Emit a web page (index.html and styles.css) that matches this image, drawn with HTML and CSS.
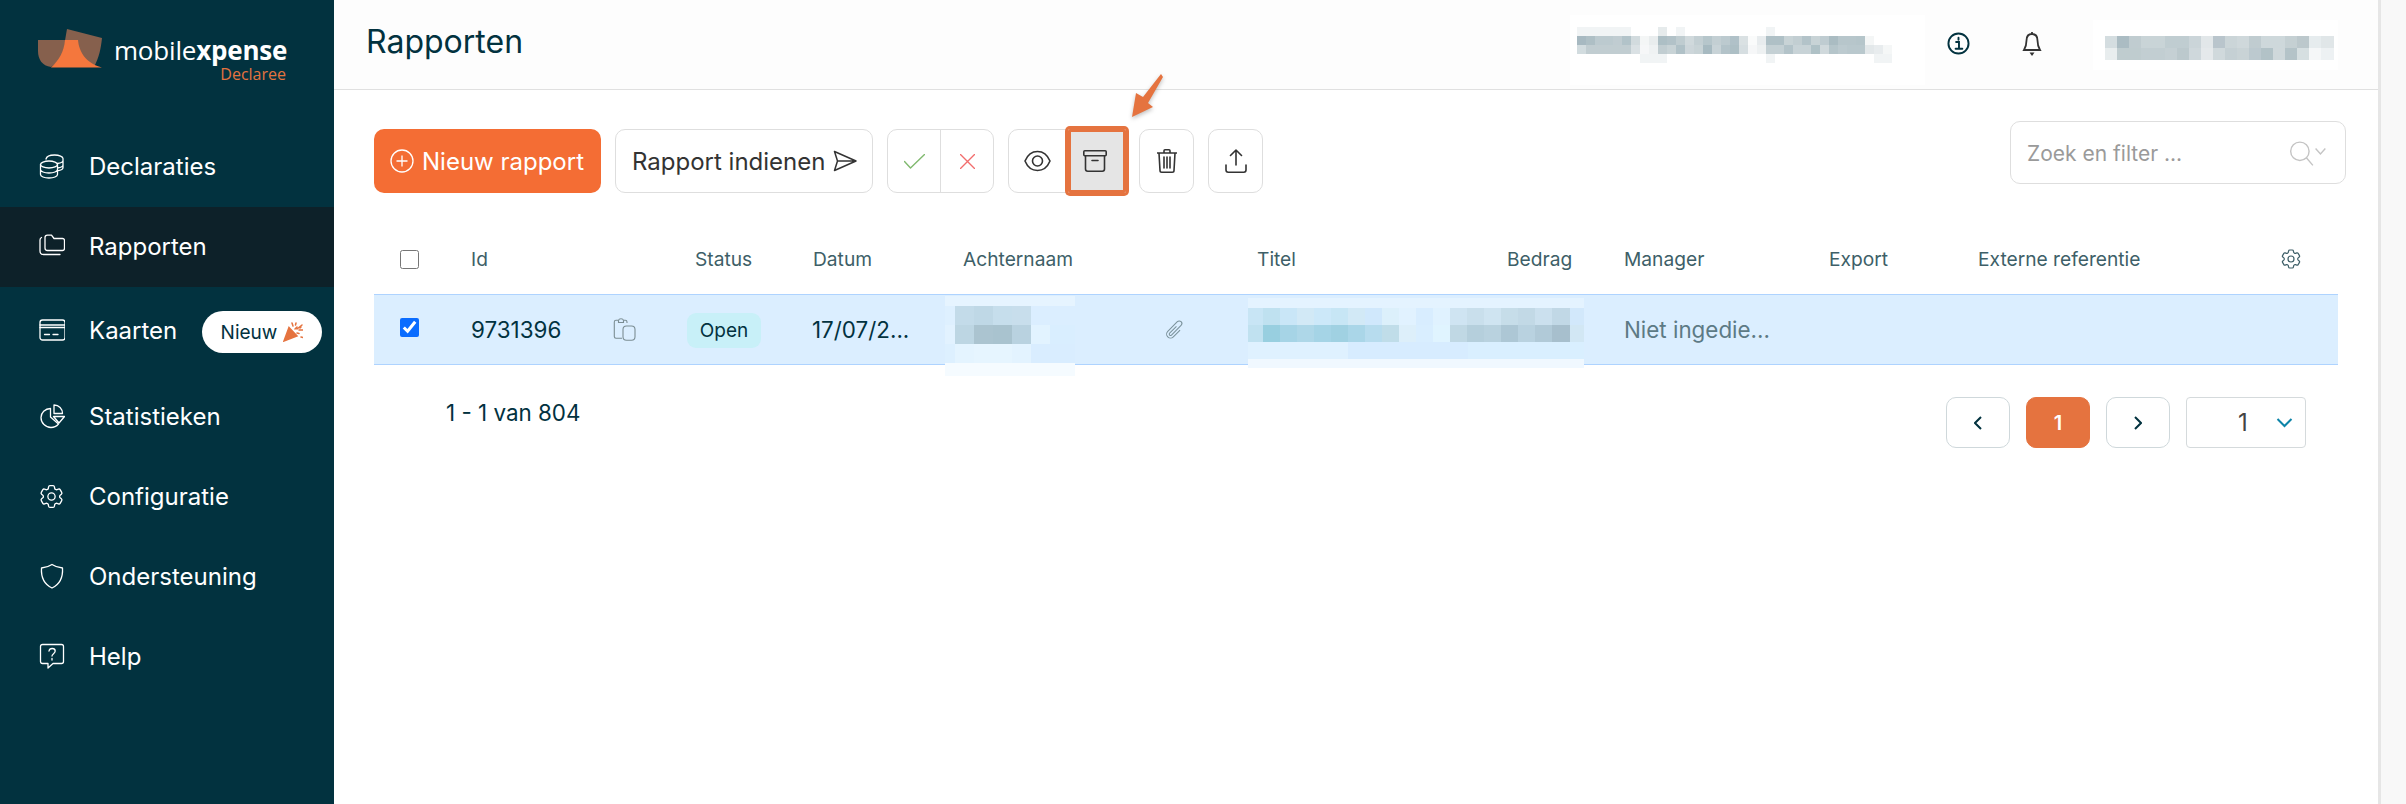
FILE: index.html
```html
<!DOCTYPE html>
<html lang="nl">
<head>
<meta charset="utf-8">
<title>Rapporten</title>
<link rel="stylesheet" href="styles.css">
</head>
<body>
<div class="app">
  <aside class="sidebar">
    <div class="logo">
      <svg class="logo-mark" viewBox="38 28 66 42">
        <path fill="#86604d" d="M38 40h26c2 0 3 0 3 0l0 4c-2 9-8 18-16 23-9-1-13-8-13-16z"/>
        <path fill="#86604d" d="M67 29l35 9c-1 10-3 20-8 29l-24-2-10-5c4-10 5-20 7-31z"/>
        <path fill="#f4773d" d="M65 40h13c1 11 7 23 24 27.500H51c8-7 13-16 14-27.500z"/>
      </svg>
      <div class="logo-text">
        <div class="logo-name">mobile<b>xpense</b></div>
        <div class="logo-sub">Declaree</div>
      </div>
    </div>
    <nav class="nav">
      <a class="nav-item">
        <svg class="nav-icon" viewBox="0 0 26 26"><ellipse cx="10" cy="11.500" rx="8.500" ry="3.500"/><path d="M1.500 11.500v10c0 2 3.800 3.500 8.500 3.500s8.500-1.500 8.500-3.500v-10M1.500 16.500c0 2 3.800 3.500 8.500 3.500s8.500-1.500 8.500-3.500M7 6c.5-2.300 4-4 8.500-4 4.900 0 8.500 1.600 8.500 3.500v9c0 1.500-2 2.800-5.500 3.300M18.500 10.500c3-.4 5.500-1.500 5.500-3M18.500 15c3-.4 5.500-1.500 5.500-3"/></svg>
        <span>Declaraties</span>
      </a>
      <a class="nav-item active">
        <svg class="nav-icon" viewBox="0 0 26 26"><path d="M6 4.500V15c0 1.400 1 2.500 2.500 2.500h15c1.200 0 2-1 2-2.200V7.500c0-1.200-.8-2-2-2H15l-2.500-3.400H8.500C7 2.100 6 3.200 6 4.500z"/><path d="M2.500 4.500C1.500 5 1 6 1 7v11c0 2 1.500 3.500 3.500 3.500H21"/></svg>
        <span>Rapporten</span>
      </a>
      <a class="nav-item tall">
        <svg class="nav-icon" viewBox="0 0 26 26"><rect x="1" y="3" width="25" height="20" rx="2.500"/><path d="M1 8h25M1 10.500h25M5.500 17.500h5M14 17.500h5"/></svg>
        <span>Kaarten</span>
        <span class="badge">Nieuw
          <svg class="party" viewBox="0 0 20 20"><path d="M6 5.500L14 14l-13 5z"/><path d="M9 1l1 3M13 1l-.5 2M19 3l-5 4M16 8h4M14 11l2 .5M18 15l2 .5M12 7l2-2M17 6l1-1"/></svg>
        </span>
      </a>
      <a class="nav-item">
        <svg class="nav-icon" viewBox="0 0 26 26"><path d="M11.500 5.500C6 5.500 2 10 2 14.500 2 20 6.500 24.500 12 24.500c3 0 5.500-1.200 7.500-3.500l-8-7z"/><path d="M15 2c5 0 8.500 3.800 8.500 8.500H15z"/><path d="M14.500 13.500h11l-5.500 6.500z"/></svg>
        <span>Statistieken</span>
      </a>
      <a class="nav-item">
        <svg class="nav-icon nav-icon-gear" viewBox="0 0 24 24"><path d="M9.594 3.940c.09-.542.560-.940 1.110-.940h2.593c.550 0 1.020.398 1.110.940l.213 1.281c.063.374.313.686.645.870.074.040.147.083.220.127.325.196.720.257 1.075.124l1.217-.456a1.125 1.125 0 0 1 1.370.490l1.296 2.247a1.125 1.125 0 0 1-.260 1.431l-1.003.827c-.293.241-.438.613-.430.992a7.723 7.723 0 0 1 0 .255c-.008.378.137.750.430.991l1.004.827c.424.350.534.955.260 1.430l-1.298 2.247a1.125 1.125 0 0 1-1.369.491l-1.217-.456c-.355-.133-.750-.072-1.076.124a6.470 6.470 0 0 1-.220.128c-.331.183-.581.495-.644.869l-.213 1.281c-.090.543-.560.940-1.110.940h-2.594c-.550 0-1.019-.398-1.110-.940l-.213-1.281c-.062-.374-.312-.686-.644-.870a6.520 6.520 0 0 1-.220-.127c-.325-.196-.720-.257-1.076-.124l-1.217.456a1.125 1.125 0 0 1-1.369-.490l-1.297-2.247a1.125 1.125 0 0 1 .260-1.431l1.004-.827c.292-.240.437-.613.430-.991a6.932 6.932 0 0 1 0-.255c.007-.380-.138-.751-.430-.992l-1.004-.827a1.125 1.125 0 0 1-.260-1.430l1.297-2.247a1.125 1.125 0 0 1 1.370-.491l1.216.456c.356.133.751.072 1.076-.124.072-.044.146-.086.220-.128.332-.183.582-.495.644-.869l.214-1.280z"/><path d="M15 12a3 3 0 1 1-6 0 3 3 0 0 1 6 0z"/></svg>
        <span>Configuratie</span>
      </a>
      <a class="nav-item">
        <svg class="nav-icon" viewBox="0 0 26 26"><path d="M13 1.500c3 2 6.500 3.200 10.500 3.500.5 8-1 15.500-10.500 20C3.500 20.500 2 13 2.500 5 6.500 4.700 10 3.500 13 1.500z"/></svg>
        <span>Ondersteuning</span>
      </a>
      <a class="nav-item">
        <svg class="nav-icon" viewBox="0 0 26 26"><path d="M3.500 1.500h19c1.200 0 2 .8 2 2v15c0 1.200-.8 2-2 2H14l-5 4.500v-4.500H3.500c-1.200 0-2-.8-2-2v-15c0-1.200.8-2 2-2z"/><path d="M10 8c.3-1.600 1.500-2.500 3.200-2.500 1.800 0 3 1 3 2.600 0 2.600-3.200 2.500-3.200 4.900M13 15.500v1.500"/></svg>
        <span>Help</span>
      </a>
    </nav>
  </aside>

  <main class="main">
    <header class="topbar">
      <h1 class="title">Rapporten</h1>
      <svg class="mosaic mosaic-org" viewBox="1570 15 355 70" fill="none" stroke-width="9">
        <path stroke="#fff" stroke-width="70" d="M1570 50h355"/>
        <path stroke="#f1f4f5" d="M1577 31.500h54M1676 31.500h9M1766 31.500h9M1640 58.500h27M1766 58.500h9M1874 58.500h18"/>
        <path stroke="#e6ebec" d="M1658 31.500h9"/>
        <path stroke="#a7b9c1" d="M1577 40.500h9"/><path stroke="#aebfc5" d="M1586 40.500h9"/><path stroke="#bccacf" d="M1595 40.500h18"/><path stroke="#c0ccd1" d="M1613 40.500h9"/><path stroke="#b2c3c9" d="M1622 40.500h9"/><path stroke="#d2dbde" d="M1631 40.500h9"/><path stroke="#f4f6f6" d="M1640 40.500h9"/><path stroke="#e9edee" d="M1649 40.500h9"/><path stroke="#adbfc5" d="M1658 40.500h9"/><path stroke="#b2c2c8" d="M1667 40.500h9"/><path stroke="#bfccd0" d="M1676 40.500h9"/><path stroke="#d0d9dc" d="M1685 40.500h9"/><path stroke="#c3cfd3" d="M1694 40.500h9"/><path stroke="#b6c6cb" d="M1703 40.500h9"/><path stroke="#c3cfd3" d="M1712 40.500h9"/><path stroke="#bccacf" d="M1721 40.500h9"/><path stroke="#b0c1c8" d="M1730 40.500h9"/><path stroke="#dae1e3" d="M1739 40.500h9"/><path stroke="#fafbfb" d="M1748 40.500h9"/><path stroke="#e8ecee" d="M1757 40.500h9"/><path stroke="#afc0c6" d="M1766 40.500h18"/><path stroke="#c8d3d6" d="M1784 40.500h9"/><path stroke="#c2ced2" d="M1793 40.500h9"/><path stroke="#b3c3c9" d="M1802 40.500h9"/><path stroke="#c8d3d6" d="M1811 40.500h9"/><path stroke="#bfccd1" d="M1820 40.500h9"/><path stroke="#aabcc2" d="M1829 40.500h9"/><path stroke="#b7c6cb" d="M1838 40.500h18"/><path stroke="#b5c5ca" d="M1856 40.500h9"/><path stroke="#f4f6f6" d="M1865 40.500h9"/>
        <path stroke="#d2dcdf" d="M1577 49.500h9"/><path stroke="#c1cdd1" d="M1586 49.500h45"/><path stroke="#dae1e4" d="M1631 49.500h9"/><path stroke="#f6f7f8" d="M1640 49.500h9"/><path stroke="#eff2f3" d="M1649 49.500h9"/><path stroke="#c1cdd1" d="M1658 49.500h9"/><path stroke="#c8d3d6" d="M1667 49.500h9"/><path stroke="#b0c1c7" d="M1676 49.500h9"/><path stroke="#cdd6da" d="M1685 49.500h9"/><path stroke="#c8d3d6" d="M1694 49.500h9"/><path stroke="#a7bac1" d="M1703 49.500h9"/><path stroke="#c8d3d7" d="M1712 49.500h9"/><path stroke="#b3c3c9" d="M1721 49.500h9"/><path stroke="#adbfc5" d="M1730 49.500h9"/><path stroke="#d6dee1" d="M1739 49.500h9"/><path stroke="#f6f7f8" d="M1748 49.500h9"/><path stroke="#eef1f2" d="M1757 49.500h9"/><path stroke="#c4d0d4" d="M1766 49.500h18"/><path stroke="#b3c3c9" d="M1784 49.500h9"/><path stroke="#c8d3d7" d="M1793 49.500h18"/><path stroke="#afc1c6" d="M1811 49.500h9"/><path stroke="#d0d9dc" d="M1820 49.500h9"/><path stroke="#b5c5ca" d="M1829 49.500h9"/><path stroke="#bccacf" d="M1838 49.500h9"/><path stroke="#b9c8cd" d="M1847 49.500h18"/><path stroke="#e3e8ea" d="M1865 49.500h9"/><path stroke="#e8ecee" d="M1874 49.500h9"/><path stroke="#f5f7f7" d="M1883 49.500h9"/>
      </svg>
      <svg class="info" viewBox="0 0 24 24"><circle cx="12" cy="12" r="10.500"/><path d="M9.500 10.500H12.500V17M9 17.500h7M12 6v2"/></svg>
      <svg class="bell" viewBox="0 0 22 26"><path d="M11 3c-3.800 0-5.500 3-5.500 6.500 0 4-1 7-2.500 9.500h16c-1.500-2.500-2.500-5.500-2.500-9.500C16.500 6 14.800 3 11 3zM11 1v2"/><path class="bell-fill" d="M8.500 21.500h5L11 25z"/></svg>
      <svg class="mosaic mosaic-user" viewBox="2093 20 245 50" fill="none" stroke-width="12">
        <path stroke="#fff" stroke-width="50" d="M2093 45h245"/>
        <path stroke="#d4dde0" d="M2105 42h12"/><path stroke="#abbcc3" d="M2117 42h12"/><path stroke="#c0ccd0" d="M2129 42h12"/><path stroke="#c9d4d7" d="M2141 42h24"/><path stroke="#c0cdd1" d="M2165 42h24"/><path stroke="#cbd5d9" d="M2189 42h12"/><path stroke="#e2e7e9" d="M2201 42h12"/><path stroke="#b9c5cc" d="M2213 42h12"/><path stroke="#cbd5d8" d="M2225 42h12"/><path stroke="#cfd8db" d="M2237 42h12"/><path stroke="#c0ccd0" d="M2249 42h12"/><path stroke="#ced8db" d="M2261 42h24"/><path stroke="#c5d0d3" d="M2285 42h12"/><path stroke="#bcc8cc" d="M2297 42h12"/><path stroke="#e6ecee" d="M2309 42h12"/><path stroke="#e0e6e8" d="M2321 42h13"/>
        <path stroke="#e8edee" d="M2105 54h12"/><path stroke="#bfcccf" d="M2117 54h24"/><path stroke="#c2ced2" d="M2141 54h24"/><path stroke="#c5d0d4" d="M2165 54h12"/><path stroke="#bcc9cd" d="M2177 54h12"/><path stroke="#cfd8dc" d="M2189 54h12"/><path stroke="#e5e9eb" d="M2201 54h12"/><path stroke="#d0d9dc" d="M2213 54h12"/><path stroke="#c5d0d4" d="M2225 54h12"/><path stroke="#c9d3d6" d="M2237 54h12"/><path stroke="#bcc9cf" d="M2249 54h12"/><path stroke="#b2c2c7" d="M2261 54h12"/><path stroke="#cfd8db" d="M2273 54h12"/><path stroke="#b4c3c8" d="M2285 54h12"/><path stroke="#d6dfe1" d="M2297 54h12"/><path stroke="#f5f7f8" d="M2309 54h12"/><path stroke="#edf1f3" d="M2321 54h13"/>
      </svg>
    </header>

    <section class="content">
      <div class="toolbar">
        <button class="btn btn-primary">
          <svg class="plus" viewBox="0 0 24 24"><circle cx="12" cy="12" r="11"/><path d="M12 6.500v11M6.500 12h11"/></svg>
          Nieuw rapport
        </button>
        <button class="btn btn-outline">
          Rapport indienen
          <svg class="send" viewBox="0 0 24 22"><path d="M1.500 1.500L23 11 1.500 20.500 4.500 11zM4.500 11H23"/></svg>
        </button>
        <div class="group">
          <button class="icon-btn btn-approve"><svg class="tool-icon icon-small" viewBox="0 0 21 15"><path class="ok" d="M.5 7.500l6 6.500L20.500.5"/></svg></button>
          <button class="icon-btn btn-reject"><svg class="tool-icon icon-small" viewBox="0 0 15 15"><path class="no" d="M.5.500l14 14M14.500.500l-14 14"/></svg></button>
        </div>
        <div class="group group-view">
          <button class="icon-btn btn-eye"><svg class="tool-icon" viewBox="0 0 27 22"><path d="M1 11C3.500 5 8 1.500 13.500 1.500S23.500 5 26 11c-2.500 6-7 9.500-12.500 9.500S3.500 17 1 11z"/><circle cx="13.500" cy="11" r="5"/></svg></button>
          <button class="icon-btn btn-archive">
            <svg class="tool-icon" viewBox="0 0 24 22"><rect x=".8" y=".8" width="22.400" height="5" rx="1"/><path d="M2.500 6v13c0 1.300.9 2.200 2.200 2.200h14.600c1.300 0 2.200-.9 2.200-2.200V6M9 10.500h6"/></svg>
            <svg class="arrow" viewBox="1125 70 42 52"><path d="M1160 74L1142 97 1135 93 1131 117 1152 107 1147 103 1162 77z"/></svg>
          </button>
        </div>
        <button class="icon-btn single"><svg class="tool-icon icon-tall" viewBox="0 0 20 24"><path d="M.5 4h19M7 4V1.800C7 1.200 7.400.8 8 .8h4c.6 0 1 .4 1 1V4M2 4l1 17.500c0 1 .8 1.700 1.700 1.700h10.600c.9 0 1.700-.7 1.700-1.700L18 4M7 8v11M10 8v11M13 8v11"/></svg></button>
        <button class="icon-btn single"><svg class="tool-icon icon-tall" viewBox="0 0 22 24"><path d="M11 16V1M5.500 6.500L11 1l5.500 5.500M1 16v5c0 1.300.9 2.200 2.200 2.200h15.600c1.300 0 2.200-.9 2.200-2.200v-5"/></svg></button>
        <div class="search">
          <span class="search-text">Zoek en filter ...</span>
          <svg class="search-icon" viewBox="0 0 34 24"><circle cx="9.500" cy="9.500" r="8.500"/><path d="M15.500 15.500l6 7M24 7l4.500 5 4.500-5"/></svg>
        </div>
      </div>

      <div class="table">
        <div class="grid thead">
          <div class="cell cell-check"><input class="check" type="checkbox"></div>
          <div>Id</div>
          <div>Status</div>
          <div>Datum</div>
          <div>Achternaam</div>
          <div>Titel</div>
          <div>Bedrag</div>
          <div>Manager</div>
          <div>Export</div>
          <div>Externe referentie</div>
          <div class="gear-cell"><svg class="gear" viewBox="0 0 24 24"><path d="M9.594 3.940c.09-.542.560-.940 1.110-.940h2.593c.550 0 1.020.398 1.110.940l.213 1.281c.063.374.313.686.645.870.074.040.147.083.220.127.325.196.720.257 1.075.124l1.217-.456a1.125 1.125 0 0 1 1.370.490l1.296 2.247a1.125 1.125 0 0 1-.260 1.431l-1.003.827c-.293.241-.438.613-.430.992a7.723 7.723 0 0 1 0 .255c-.008.378.137.750.430.991l1.004.827c.424.350.534.955.260 1.430l-1.298 2.247a1.125 1.125 0 0 1-1.369.491l-1.217-.456c-.355-.133-.750-.072-1.076.124a6.470 6.470 0 0 1-.220.128c-.331.183-.581.495-.644.869l-.213 1.281c-.090.543-.560.940-1.110.940h-2.594c-.550 0-1.019-.398-1.110-.940l-.213-1.281c-.062-.374-.312-.686-.644-.870a6.520 6.520 0 0 1-.220-.127c-.325-.196-.720-.257-1.076-.124l-1.217.456a1.125 1.125 0 0 1-1.369-.490l-1.297-2.247a1.125 1.125 0 0 1 .260-1.431l1.004-.827c.292-.240.437-.613.430-.991a6.932 6.932 0 0 1 0-.255c.007-.380-.138-.751-.430-.992l-1.004-.827a1.125 1.125 0 0 1-.260-1.430l1.297-2.247a1.125 1.125 0 0 1 1.370-.491l1.216.456c.356.133.751.072 1.076-.124.072-.044.146-.086.220-.128.332-.183.582-.495.644-.869l.214-1.280z"/><path d="M15 12a3 3 0 1 1-6 0 3 3 0 0 1 6 0z"/></svg></div>
        </div>
        <div class="grid trow">
          <div class="cell cell-check"><input class="check check-row" type="checkbox" checked></div>
          <div class="cell cell-id">
            <span class="id-val">9731396</span>
            <svg class="copy" viewBox="0 0 23 23"><path d="M14 5V4c0-1-.7-1.700-1.700-1.700H10.500C10.200 1.200 9.500.7 8 .7S5.800 1.200 5.500 2.300H3C2 2.300 1.300 3 1.300 4v14.500c0 1 .7 1.700 1.700 1.700h6"/><path d="M5.500 2.300v2.200h5V2.300"/><rect x="10" y="8" width="12" height="14.300" rx="3.500"/></svg>
          </div>
          <div class="cell"><span class="pill">Open</span></div>
          <div class="cell date">17/07/2...</div>
          <div class="cell cell-lastname">
            <svg class="mosaic mosaic-name" viewBox="945 296 130 80" fill="none">
              <path stroke="#e6f4ff" stroke-width="10" d="M945 301h130"/>
              <path stroke="#f5fbff" stroke-width="13" d="M945 369.500h130"/>
              <g stroke-width="19">
                <path stroke="#def0ff" d="M945 315.500h10"/><path stroke="#c3dbe9" d="M955 315.500h19"/><path stroke="#bfd8e6" d="M974 315.500h19"/><path stroke="#c6deec" d="M993 315.500h19"/><path stroke="#c8deec" d="M1012 315.500h19"/><path stroke="#dbeeff" d="M1031 315.500h44"/>
                <path stroke="#e2f2ff" d="M945 334.500h10"/><path stroke="#bdd6e3" d="M955 334.500h19"/><path stroke="#abc4d0" d="M974 334.500h19"/><path stroke="#a9c3cf" d="M993 334.500h19"/><path stroke="#b9d2e0" d="M1012 334.500h19"/><path stroke="#e2f3ff" d="M1031 334.500h19"/><path stroke="#d9eeff" d="M1050 334.500h25"/>
                <path stroke="#ddf0ff" d="M945 353.500h10"/><path stroke="#e4f4ff" d="M955 353.500h19"/><path stroke="#e6f5ff" d="M974 353.500h38"/><path stroke="#e3f3ff" d="M1012 353.500h19"/><path stroke="#d9edff" d="M1031 353.500h44"/>
              </g>
            </svg>
            <svg class="clip" viewBox="0 0 24 24"><path d="M18.375 12.739l-7.693 7.693a4.500 4.500 0 0 1-6.364-6.364l10.940-10.940A3 3 0 1 1 19.500 7.372L8.552 18.320m5.688-9.941l-7.810 7.810a1.500 1.500 0 0 0 2.112 2.130"/></svg>
          </div>
          <div class="cell cell-title">
            <svg class="mosaic mosaic-title" viewBox="1248 298 336 70" fill="none">
              <path stroke="#e4f3ff" stroke-width="10" d="M1248 303h336"/>
              <path stroke="#f0f8ff" stroke-width="9" d="M1248 363.500h336"/>
              <g stroke-width="17">
                <path stroke="#c8e5f5" d="M1248 316.500h15"/><path stroke="#bfe1f0" d="M1263 316.500h17"/><path stroke="#c9e6f7" d="M1280 316.500h17"/><path stroke="#d2e9f6" d="M1297 316.500h17"/><path stroke="#cce8f9" d="M1314 316.500h17"/><path stroke="#c7e6f5" d="M1331 316.500h17"/><path stroke="#d2e9f6" d="M1348 316.500h17"/><path stroke="#d0e8fc" d="M1365 316.500h17"/><path stroke="#dcf0fb" d="M1382 316.500h17"/><path stroke="#e1f2ff" d="M1399 316.500h17"/><path stroke="#d8edff" d="M1416 316.500h17"/><path stroke="#e0f2ff" d="M1433 316.500h17"/><path stroke="#cfe4f2" d="M1450 316.500h17"/><path stroke="#c9dfec" d="M1467 316.500h17"/><path stroke="#cfe4f1" d="M1484 316.500h17"/><path stroke="#c6dde9" d="M1501 316.500h17"/><path stroke="#c2d9e6" d="M1518 316.500h17"/><path stroke="#cbe0ee" d="M1535 316.500h17"/><path stroke="#c1d8e6" d="M1552 316.500h18"/><path stroke="#d2e8fb" d="M1570 316.500h14"/>
                <path stroke="#c0e1f0" d="M1248 333.500h15"/><path stroke="#98cfe0" d="M1263 333.500h17"/><path stroke="#a6d4e6" d="M1280 333.500h17"/><path stroke="#aed7e8" d="M1297 333.500h17"/><path stroke="#a5d4e6" d="M1314 333.500h17"/><path stroke="#a0d1e2" d="M1331 333.500h17"/><path stroke="#aad6e8" d="M1348 333.500h17"/><path stroke="#b7dcee" d="M1365 333.500h17"/><path stroke="#c0dde9" d="M1382 333.500h17"/><path stroke="#ddeffa" d="M1399 333.500h17"/><path stroke="#d9eeff" d="M1416 333.500h17"/><path stroke="#e0f4ff" d="M1433 333.500h17"/><path stroke="#c0d8e4" d="M1450 333.500h17"/><path stroke="#b5cfdc" d="M1467 333.500h17"/><path stroke="#b9d2df" d="M1484 333.500h17"/><path stroke="#adc7d5" d="M1501 333.500h17"/><path stroke="#b9d2e0" d="M1518 333.500h17"/><path stroke="#b1cad8" d="M1535 333.500h17"/><path stroke="#a7bfcd" d="M1552 333.500h18"/><path stroke="#d2e7f4" d="M1570 333.500h14"/>
                <path stroke="#dff1ff" d="M1248 350.500h100"/><path stroke="#d7ecff" d="M1348 350.500h120"/><path stroke="#d9efff" d="M1468 350.500h116"/>
              </g>
            </svg>
          </div>
          <div class="cell"></div>
          <div class="cell manager">Niet ingedie...</div>
          <div class="cell"></div>
          <div class="cell"></div>
          <div class="cell"></div>
        </div>
        <div class="footer">
          <div class="count">1 - 1 van 804</div>
          <div class="pager">
            <button class="page"><svg class="chev" viewBox="0 0 8 14"><path d="M7 1L1 7l6 6"/></svg></button>
            <button class="page current">1</button>
            <button class="page"><svg class="chev" viewBox="0 0 8 14"><path d="M1 1l6 6-6 6"/></svg></button>
            <div class="page-select"><span>1</span><svg class="select-chev" viewBox="0 0 16 10"><path d="M1 1l7 7 7-7"/></svg></div>
          </div>
        </div>
      </div>
    </section>
  </main>
  <div class="strip"></div>
</div>
</body>
</html>
```

FILE: styles.css
```css
* { box-sizing: border-box; }
html, body { margin: 0; height: 100%; }
body { font-family: Inter, "Liberation Sans", sans-serif; color: #02323f; background: #fff; overflow: hidden; }
button { font: inherit; cursor: pointer; }
svg { display: block; flex: none; }
.app { display: flex; height: 804px; }

.sidebar { width: 334px; flex: none; background: #02323f; color: #fff; }
.logo { height: 127px; padding: 29px 0 0 38px; display: flex; align-items: flex-start; }
.logo-mark { width: 66px; height: 42px; margin-top: -1px; }
.logo-text { margin: 8px 0 0 10px; width: 172px; text-align: right; }
.logo-name { font-family: "Open Sans", sans-serif; font-size: 26px; line-height: 26px; letter-spacing: -.2px; white-space: nowrap; }
.logo-name b { font-weight: 700; }
.logo-sub { font-family: "Open Sans", sans-serif; font-size: 16px; font-weight: 500; line-height: 16px; margin-top: 3px; color: #e5733f; }
.nav { display: flex; flex-direction: column; }
.nav-item { height: 80px; display: flex; align-items: center; padding: 0 0 2px 39px; font-size: 24px; }
.nav-item.tall { height: 90px; padding-bottom: 4px; }
.nav-item.active { background: #0d2129; }
.nav-icon { width: 26px; height: 26px; margin-right: 24px; fill: none; stroke: #fff; stroke-width: 1.3; stroke-linecap: round; stroke-linejoin: round; }
.nav-icon-gear { width: 29px; height: 29px; margin: 0 23px 0 -2px; stroke-width: 1.100; }
.badge { margin: 4px 12px 0 auto; width: 120px; height: 42px; border-radius: 21px; background: #fff; color: #02323f; font-size: 19px; display: flex; align-items: center; justify-content: center; gap: 6px; }
.party { width: 20px; height: 20px; fill: #e5733f; stroke: #e5733f; stroke-width: 1.500; stroke-linecap: round; }

.main { flex: 1; min-width: 0; display: flex; flex-direction: column; }
.topbar { height: 90px; flex: none; display: flex; align-items: center; padding-left: 32px; background: #fdfdfd; border-bottom: 1px solid #e0e0e0; }
.title { margin: -6px 0 0; font-size: 32px; font-weight: 400; color: #02323f; }
.mosaic { shape-rendering: crispEdges; }
.mosaic-org { width: 355px; height: 70px; align-self: flex-start; margin: 15px 22px 0 auto; }
.info { width: 23px; height: 23px; fill: none; stroke: #02323f; stroke-width: 2; stroke-linecap: round; margin-top: -3px; }
.bell { width: 22px; height: 26px; margin: -2px 0 0 51px; fill: none; stroke: #333; stroke-width: 1.800; }
.bell-fill { fill: #333; stroke: none; }
.mosaic-user { width: 245px; height: 50px; margin: 0 40px 0 50px; }

.content { padding: 39px 32px 0 40px; }
.toolbar { display: flex; align-items: flex-start; gap: 14px; height: 64px; }
.btn { height: 64px; border-radius: 10px; font-size: 24px; display: flex; align-items: center; white-space: nowrap; }
.btn-primary { width: 227px; background: #f46d34; border: 0; color: #fff; padding: 0 0 0 16px; gap: 8px; }
.plus { width: 24px; height: 24px; fill: none; stroke: #fff; stroke-width: 1.300; }
.btn-outline { width: 258px; background: #fff; border: 1px solid #dedede; color: #333; padding: 0 0 0 16px; gap: 8px; }
.send { width: 24px; height: 22px; fill: none; stroke: #333; stroke-width: 1.500; stroke-linejoin: round; }
.group { display: flex; height: 64px; border: 1px solid #dedede; border-radius: 10px; background: #fff; }
.icon-btn { height: 100%; border: 0; background: none; padding: 0; display: flex; align-items: center; justify-content: center; }
.btn-approve { width: 53px; border-right: 1px solid #dedede; }
.btn-reject { width: 52px; }
.group-view { width: 117px; }
.btn-eye { width: 59px; padding-right: 2px; }
.btn-archive { position: relative; width: 59px; height: 64px; margin: -1px -2px -1px 0; padding-right: 3px; background: #e5e5e5; border-radius: 2px; box-shadow: inset 0 0 0 3px #e5733f, 0 0 0 3px #e5733f; }
.arrow { position: absolute; left: 58px; top: -59px; width: 42px; height: 52px; fill: #e5733f; filter: drop-shadow(0 2px 2px rgba(0,0,0,.25)); }
.single { width: 55px; height: 64px; border: 1px solid #dedede; border-radius: 10px; background: #fff; }
.tool-icon { height: 22px; width: auto; fill: none; stroke: #333; stroke-width: 1.600; stroke-linecap: round; stroke-linejoin: round; }
.icon-small { height: 15px; stroke-width: 1.400; }
.icon-tall { height: 24px; }
.ok { stroke: #80b96f; }
.no { stroke: #f26d6d; }
.search { margin: -8px 0 0 auto; width: 336px; height: 63px; border: 1px solid #dedede; border-radius: 10px; display: flex; align-items: center; padding: 2px 18px 0 16px; justify-content: space-between; }
.search-text { font-size: 21px; color: #9a9a9a; }
.search-icon { width: 38px; height: 26px; fill: none; stroke: #c4c4c4; stroke-width: 1.300; }

.table { margin: 31px 8px 0 0; }
.grid { display: grid; grid-template-columns: 97px 224px 118px 150px 294px 250px 117px 205px 149px 303px 57px; align-items: center; }
.thead { height: 70px; font-size: 19.200px; color: #3e5f68; }
.trow { height: 71px; background: #dbeeff; border-top: 1px solid #aed3ff; border-bottom: 1px solid #aed3ff; position: relative; font-size: 22.400px; color: #02323f; }
.cell-check { padding-left: 26px; display: flex; }
.check { width: 19px; height: 19px; margin: 0; accent-color: #0a6cff; }
.check-row { margin-top: -4px; }
.cell-id { display: flex; align-items: center; }
.id-val { width: 142px; }
.copy { width: 23px; height: 23px; fill: none; stroke: #7b8d93; stroke-width: 1.100; }
.pill { display: inline-flex; align-items: center; justify-content: center; width: 74px; height: 35px; margin: 2px 0 0 -8px; border-radius: 9px; background: #c8f0f8; font-size: 19px; }
.date { margin-left: -1px; }
.cell-lastname, .cell-title { align-self: stretch; position: relative; }
.mosaic-name { position: absolute; left: -18px; top: 1px; width: 130px; height: 80px; }
.mosaic-title { position: absolute; left: -9px; top: 3px; width: 336px; height: 70px; }
.clip { position: absolute; left: 201px; top: 24px; width: 21px; height: 21px; fill: none; stroke: #7b929b; stroke-width: 1.200; }
.manager { color: #5d7a85; white-space: nowrap; }
.gear-cell { display: flex; }
.gear { width: 24px; height: 24px; margin-left: -2px; fill: none; stroke: #3e5f68; stroke-width: 1.200; }

.footer { display: flex; justify-content: space-between; padding: 32px 32px 0 72px; }
.count { font-size: 22.400px; line-height: 30px; color: #02323f; padding-top: 1px; }
.pager { display: flex; gap: 16px; }
.page { width: 64px; height: 51px; border: 1px solid #cfd8db; border-radius: 10px; background: #fff; padding: 0; font-size: 20px; display: flex; align-items: center; justify-content: center; }
.page.current { background: #e5733f; border-color: #e5733f; color: #fff; font-weight: 600; }
.chev { width: 8px; height: 14px; fill: none; stroke: #02323f; stroke-width: 2; }
.page-select { width: 120px; height: 51px; border: 1px solid #d5dadc; border-radius: 4px; font-size: 24px; color: #444; display: flex; align-items: center; padding-left: 51px; }
.select-chev { width: 17px; height: 10px; margin-left: 28px; fill: none; stroke: #0e84a8; stroke-width: 2; }

.strip { width: 28px; flex: none; background: #f8f8f8; border-left: 3px solid #e6e6e6; }
```
